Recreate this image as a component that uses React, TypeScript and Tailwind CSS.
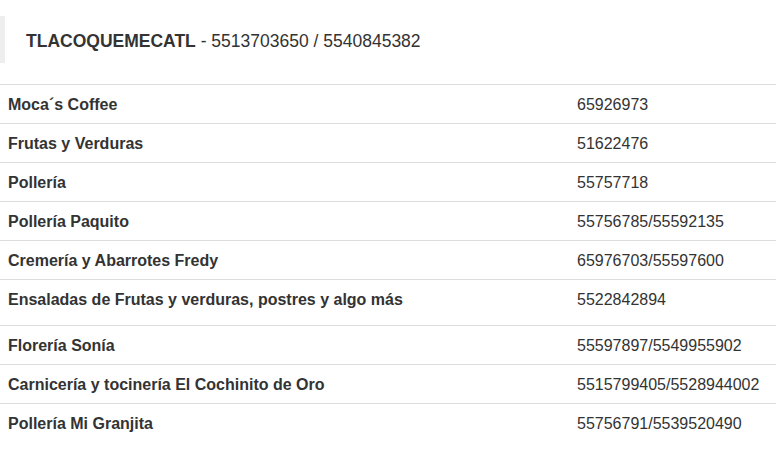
export default function App() {
  const rows: [string, string, boolean?][] = [
    ["Moca´s Coffee", "65926973"],
    ["Frutas y Verduras", "51622476"],
    ["Pollería", "55757718"],
    ["Pollería Paquito", "55756785/55592135"],
    ["Cremería y Abarrotes Fredy", "65976703/55597600"],
    ["Ensaladas de Frutas y verduras, postres y algo más", "5522842894", true],
    ["Florería Sonía", "55597897/5549955902"],
    ["Carnicería y tocinería El Cochinito de Oro", "5515799405/5528944002"],
    ["Pollería Mi Granjita", "55756791/5539520490"],
  ];
  return (
    <div
      className="w-[776px] h-[463px] bg-white text-[#333] overflow-hidden"
      style={{ fontFamily: '"Liberation Sans", Arial, sans-serif' }}
    >
      <div className="pt-[16px]">
        <div className="border-l-[5px] border-[#eeeeee] h-[47px] pl-[21px] pt-[3px] flex items-center text-[17.5px]">
          <span className="font-bold">TLACOQUEMECATL</span>
          <span>&nbsp;- 5513703650 / 5540845382</span>
        </div>
      </div>
      <div className="mt-[21px]">
        {rows.map(([name, phone, tall]) => (
          <div
            key={name}
            className={`flex border-t border-[#dddddd] text-[16px] ${tall ? "h-[46px] items-start pt-[8px]" : "h-[39px] items-center pt-[2px]"}`}
          >
            <div className="w-[577px] pl-[8px] font-bold">{name}</div>
            <div>{phone}</div>
          </div>
        ))}
      </div>
    </div>
  );
}
